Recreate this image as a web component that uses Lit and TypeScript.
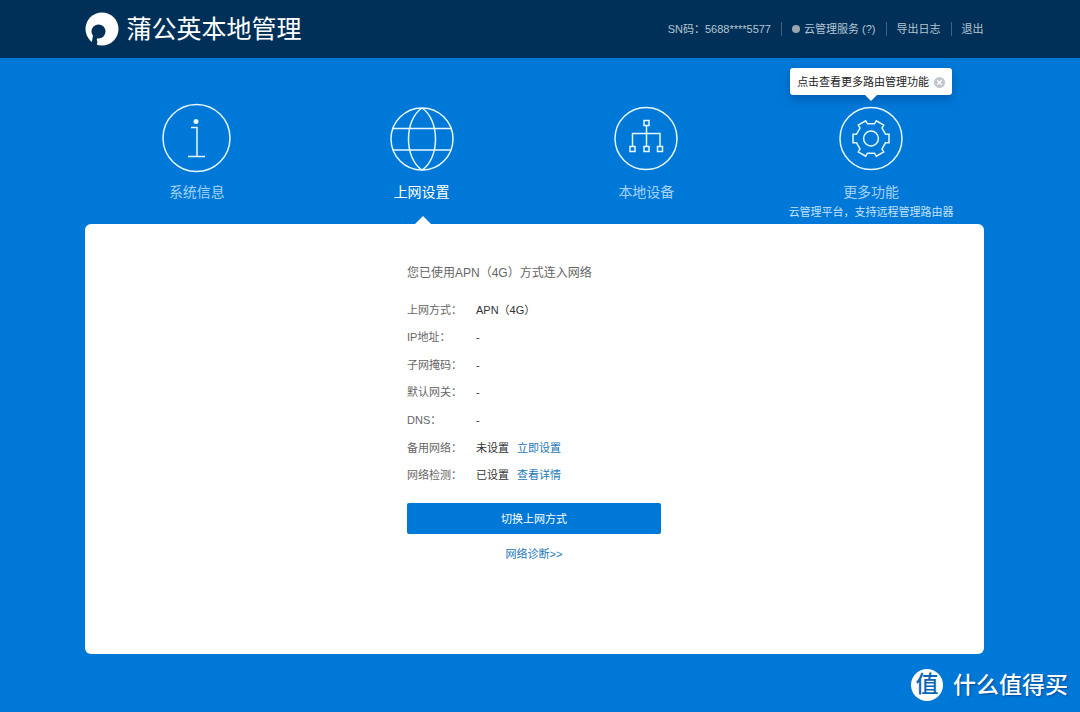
import { LitElement, html, css, svg, nothing } from "lit";
import { customElement, state } from "lit/decorators.js";

const icons = {
  info: svg`<circle cx="34.5" cy="35" r="33.5"/><circle cx="34" cy="18.5" r="2.5" fill="currentColor" stroke="none"/><path d="M29 24.5h6v29M26 53.5h17"/>`,
  globe: svg`<circle cx="35" cy="36" r="31"/><path d="M35 5C17 17 17 55 35 67C53 55 53 17 35 5M6 25.5h58M6 47h58"/>`,
  devices: svg`<circle cx="35" cy="35.5" r="31"/><path d="M33 17.500h5v5h-5zM19 43.500h5v5h-5zM33 43.500h5v5h-5zM46.500 43.500h5v5h-5zM35.500 22.500v21M21.500 43.500v-13h27.500v13"/>`,
  gear: svg`<circle cx="35" cy="35.500" r="31"/><circle cx="35" cy="35.500" r="7.400"/><path d="M49.500 31.200H53V39.800H49.500L46 45.900L47.700 48.900L40.300 53.200L38.500 50.200H31.500L29.700 53.200L22.300 48.900L24 45.900L20.500 39.800H17V31.200H20.500L24 25.100L22.300 22.100L29.700 17.800L31.500 20.800H38.500L40.300 17.800L47.700 22.100L46 25.100Z"/>`,
};

const tabs = [
  { label: "系统信息", icon: icons.info },
  { label: "上网设置", icon: icons.globe },
  { label: "本地设备", icon: icons.devices },
  { label: "更多功能", icon: icons.gear, note: "云管理平台，支持远程管理路由器", tip: "点击查看更多路由管理功能" },
];

const rows = [
  { label: "上网方式：", value: "APN（4G）" },
  { label: "IP地址：", value: "-" },
  { label: "子网掩码：", value: "-" },
  { label: "默认网关：", value: "-" },
  { label: "DNS：", value: "-" },
  { label: "备用网络：", value: "未设置", link: "立即设置" },
  { label: "网络检测：", value: "已设置", link: "查看详情" },
];

@customElement("app-root")
class AppRoot extends LitElement {
  @state() private active = 1;
  @state() private tipOpen = true;

  static styles = css`
    :host {
      display: block;
      position: relative;
      min-height: 100vh;
      background: #0078d8;
      color: #333;
      font: 11px/20px "Liberation Sans", "Noto Sans CJK SC", sans-serif;
    }
    * { box-sizing: border-box; }
    a { color: #1a77b9; text-decoration: none; }
    button { font: inherit; border: 0; padding: 0; cursor: pointer; background: none; color: inherit; }
    .bar { background: #003057; padding-right: 12px; }
    .wrap { max-width: 899px; margin: 0 auto; }
    .head { display: flex; align-items: center; justify-content: space-between; height: 58px; }
    .brand { display: flex; align-items: center; gap: 8px; color: #fff; }
    .brand svg { width: 34px; height: 34px; }
    h1 { margin: 0; font-size: 25px; line-height: 34px; font-weight: 400; }
    .links { display: flex; align-items: center; gap: 10px; color: #b5c5d3; }
    .links a { color: inherit; }
    .sep { width: 1px; height: 14px; background: #41627f; }
    .cloud { display: flex; align-items: center; gap: 4px; }
    .dot { width: 8px; height: 8px; border-radius: 50%; background: #9da5ad; }
    .main { padding-right: 12px; }
    .tabs { display: grid; grid-template-columns: repeat(4, 1fr); }
    .cell { position: relative; }
    .tab { display: flex; flex-direction: column; align-items: center; width: 100%; height: 100%; padding: 45px 0 2px; color: #a5d3f5; }
    .tab svg { width: 70px; height: 70px; color: #e6f8ff; fill: none; stroke: currentColor; stroke-width: 1.5; }
    .name { margin-top: 9px; font-size: 14px; }
    .note { white-space: nowrap; color: #c4e2f8; }
    .on .name { color: #fff; }
    .on::after {
      content: ""; position: absolute; bottom: 0; left: 50%; margin-left: -7px;
      border: 8px solid transparent; border-top: 0; border-bottom-color: #fff;
    }
    .tip {
      position: absolute; top: 10px; left: 50%; transform: translateX(-50%);
      display: flex; align-items: center; gap: 5px; padding: 4px 7px 3px; white-space: nowrap;
      color: #222; background: #fff; border-radius: 3px; box-shadow: 0 4px 10px rgba(0, 30, 80, 0.3);
    }
    .tip::after {
      content: ""; position: absolute; top: 100%; left: 50%; margin-left: -6px;
      border: 6px solid transparent; border-bottom: 0; border-top-color: #fff;
    }
    .close { display: flex; }
    .close svg { width: 11px; height: 11px; }
    .panel { min-height: 430px; padding: 39px 20px; background: #fff; border-radius: 6px; }
    .form { max-width: 254px; margin: 0 auto; }
    h2 { margin: 0 0 13px; font-size: 12px; line-height: 20px; font-weight: 400; color: #666; white-space: nowrap; }
    dl { display: grid; grid-auto-rows: 1fr; min-height: 193px; margin: 0 0 14px; }
    .row { display: flex; align-items: center; }
    dt { width: 69px; color: #666; }
    dd { display: flex; gap: 8px; margin: 0; }
    .switch { display: block; width: 100%; height: 31px; color: #fff; background: #0078d8; border-radius: 2px; }
    .diag { margin-top: 10px; text-align: center; }
    .mark { position: absolute; right: 12px; bottom: 11px; display: flex; align-items: center; gap: 10px; color: #fff; font-size: 23px; line-height: 32px; text-shadow: 1px 1px 2px rgba(0, 30, 80, 0.5); }
    .brandname { font-weight: 500; }
    .seal { width: 32px; height: 32px; border-radius: 50%; background: #fff; color: #0a66b4; text-align: center; font-weight: 500; line-height: 30px; text-shadow: none; }
  `;

  render() {
    return html`
      <header class="bar">
        <div class="wrap head">
          <div class="brand">
            <svg viewBox="0 0 34 34" aria-hidden="true">
              <circle cx="17" cy="17" r="16.500" fill="currentColor"/>
              <circle cx="13.500" cy="19.500" r="7" fill="#003057"/>
              <path d="M8 23.500L6.500 32L11.500 34L12.500 29.500A2.500 2.500 0 0 1 12.500 26z" fill="#003057"/>
            </svg>
            <h1>蒲公英本地管理</h1>
          </div>
          <nav class="links">
            <span>SN码：5688****5577</span>
            <span class="sep"></span>
            <a class="cloud" href="#"><span class="dot"></span>云管理服务 (?)</a>
            <span class="sep"></span>
            <a href="#">导出日志</a>
            <span class="sep"></span>
            <a href="#">退出</a>
          </nav>
        </div>
      </header>
      <main class="main">
        <div class="wrap">
          <nav class="tabs">
            ${tabs.map((t, i) => html`
              <div class="cell">
                <button class="tab ${i === this.active ? "on" : ""}" @click=${() => (this.active = i)}>
                  <svg viewBox="0 0 70 70" aria-hidden="true">${t.icon}</svg>
                  <span class="name">${t.label}</span>
                  ${t.note ? html`<span class="note">${t.note}</span>` : nothing}
                </button>
                ${t.tip && this.tipOpen ? html`
                  <div class="tip">
                    <span>${t.tip}</span>
                    <button class="close" aria-label="关闭" @click=${() => (this.tipOpen = false)}>
                      <svg viewBox="0 0 11 11"><circle cx="5.500" cy="5.500" r="5.500" fill="#c3c6cb"/><path d="M3.300 3.300l4.400 4.400M7.700 3.300l-4.400 4.400" stroke="#fff" stroke-width="1.300"/></svg>
                    </button>
                  </div>` : nothing}
              </div>`)}
          </nav>
          <section class="panel">
            <div class="form">
              <h2>您已使用APN（4G）方式连入网络</h2>
              <dl>
                ${rows.map((r) => html`
                  <div class="row">
                    <dt>${r.label}</dt>
                    <dd><span>${r.value}</span>${r.link ? html`<a href="#">${r.link}</a>` : nothing}</dd>
                  </div>`)}
              </dl>
              <button class="switch">切换上网方式</button>
              <div class="diag"><a href="#">网络诊断&gt;&gt;</a></div>
            </div>
          </section>
        </div>
      </main>
      <div class="mark"><span class="seal">值</span><span class="brandname">什么值得买</span></div>
    `;
  }
}
